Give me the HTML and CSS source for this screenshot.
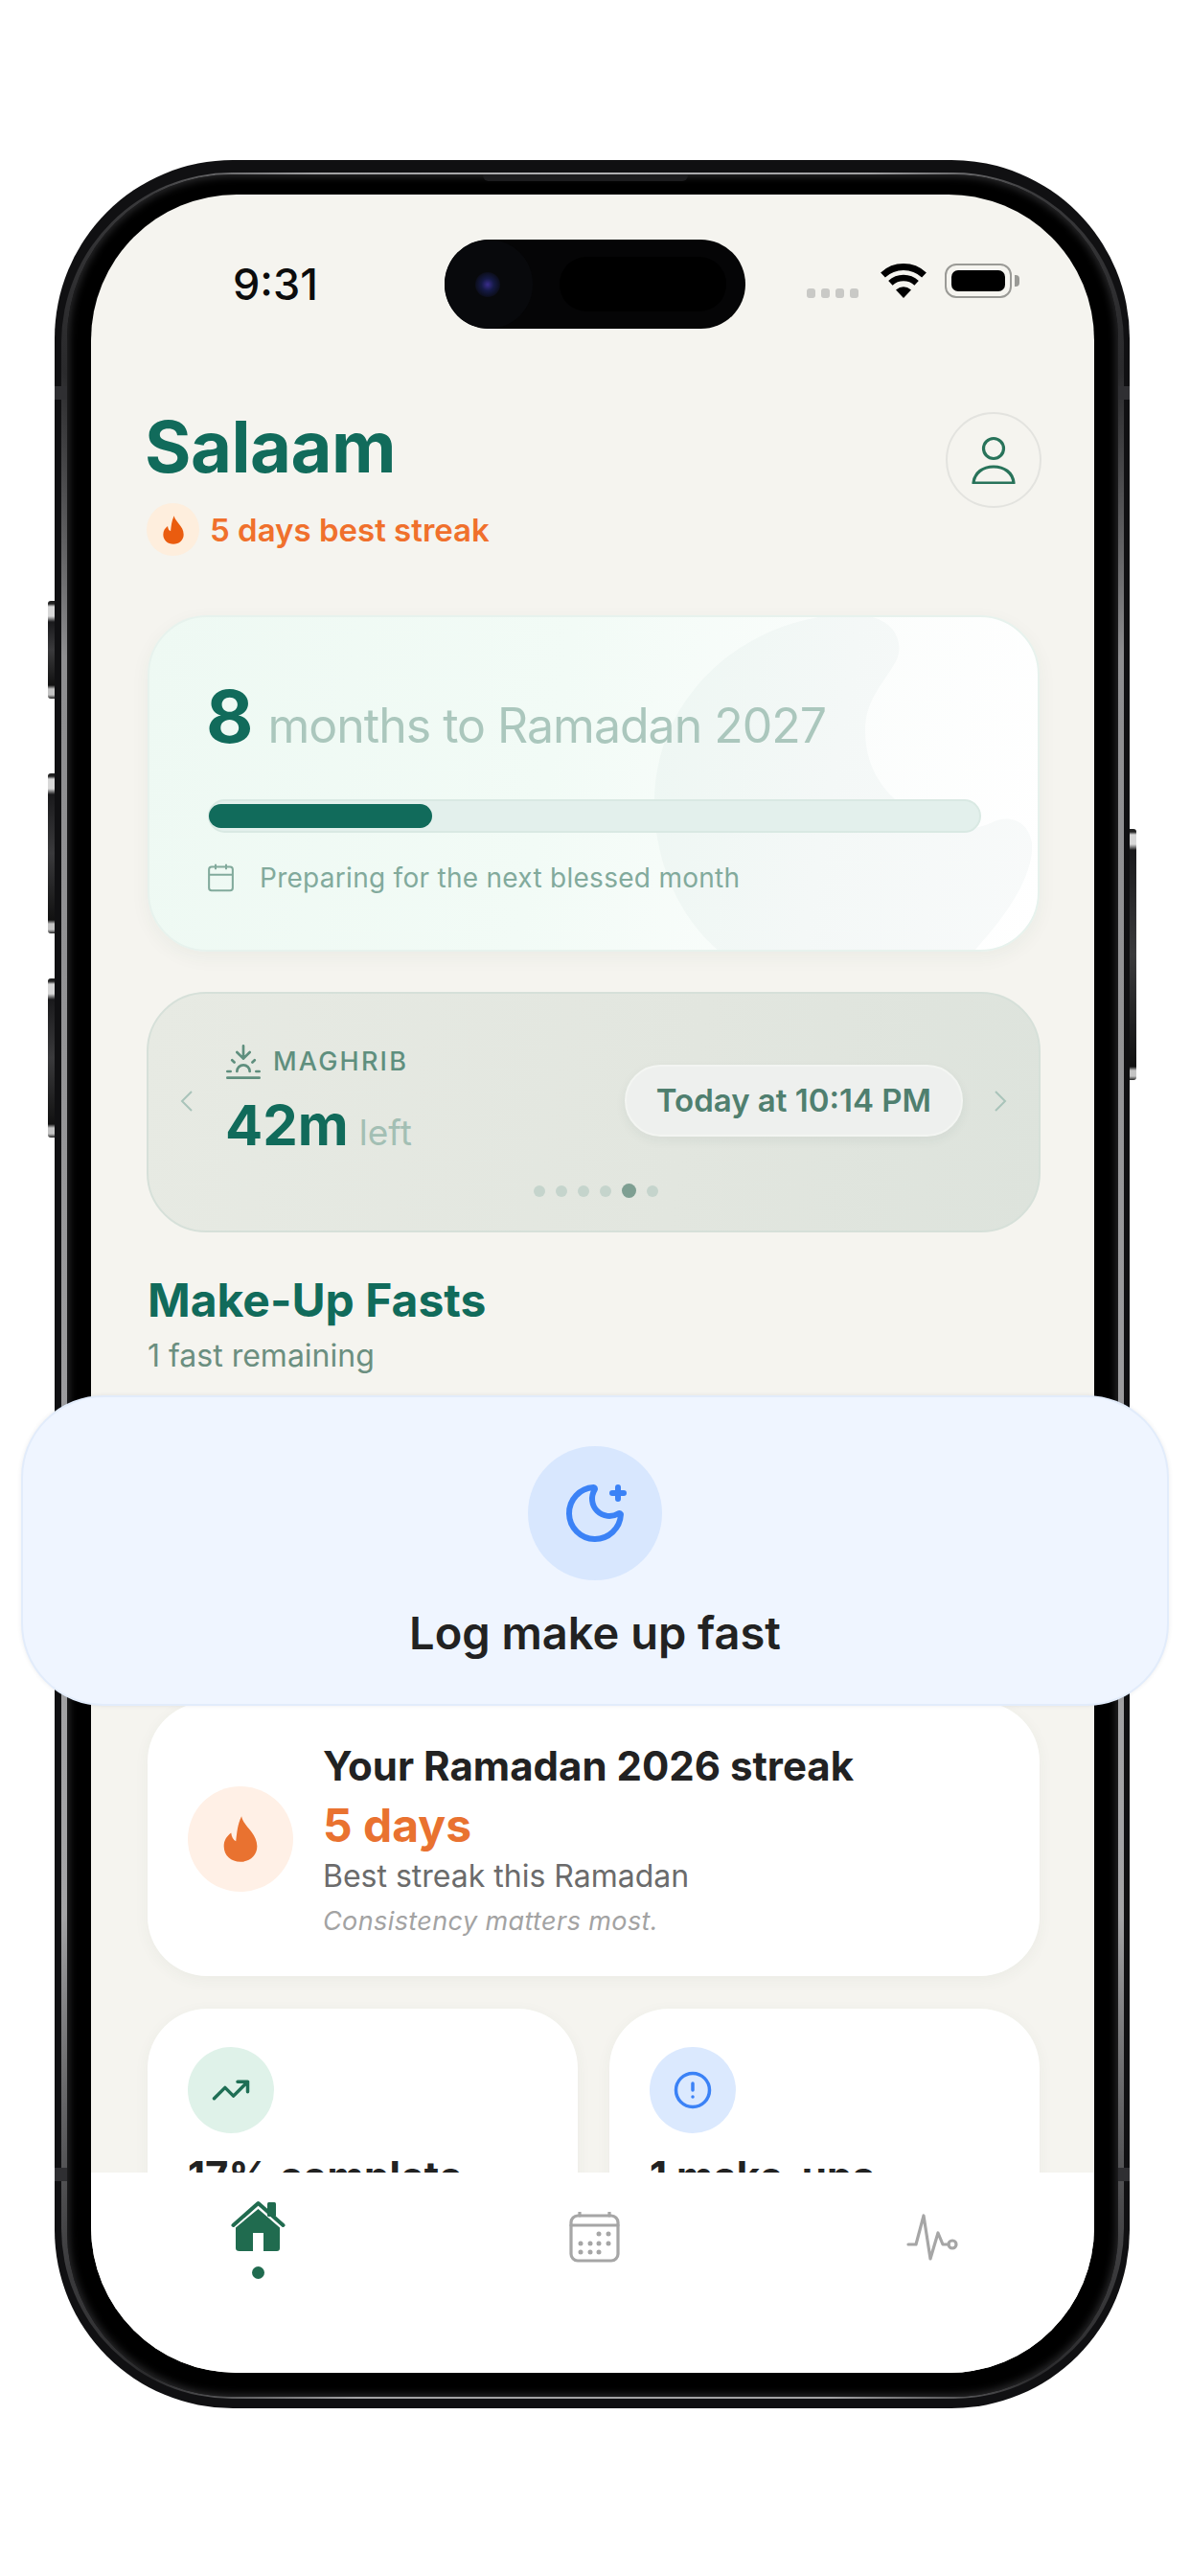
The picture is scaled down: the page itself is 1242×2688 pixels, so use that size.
FILE: index.html
```html
<!DOCTYPE html>
<html lang="en">
<head>
<meta charset="utf-8">
<title>Salaam</title>
<link rel="stylesheet" href="styles.css">
</head>
<body>
<div class="stage">
  <span class="side side-a"></span>
  <span class="side side-b"></span>
  <span class="side side-c"></span>
  <span class="side side-r"></span>
  <div class="phone">
    <span class="band band-tl"></span><span class="band band-tr"></span><span class="band band-bl"></span><span class="band band-br"></span>
    <div class="rim">
      <div class="bezel">
        <span class="speaker"></span>
        <div class="screen">
          <div class="scroll">
            <div class="status">
              <span class="time">9:31</span>
              <div class="island"><span class="lens-well"><span class="lens"></span></span><span class="island-pad"></span></div>
              <div class="status-right">
                <div class="signal"><i></i><i></i><i></i><i></i></div>
                <svg class="wifi" viewBox="0 0 48 36"><path d="M2.5 12A31.5 31.5 0 0 1 45.5 12" fill="none" stroke="#000" stroke-width="7"/><path d="M10.4 20.4A20 20 0 0 1 37.6 20.4" fill="none" stroke="#000" stroke-width="6.5"/><path d="M24 36L16 27.5Q24 21 32 27.5Z" fill="#000"/></svg>
                <div class="battery"><span class="battery-fill"></span></div>
                <span class="battery-nub"></span>
              </div>
            </div>

            <header class="head">
              <div class="head-left">
                <h1 class="hello">Salaam</h1>
                <div class="best">
                  <span class="best-icon"><svg class="flame-s" viewBox="0 0 24 24"><path d="M12.5 1C13.5 6 20 9 20 15.5C20 20 16.5 23 12 23C7.5 23 4 20 4 15.5C4 12.5 5.5 10.5 7.5 9C7.7 11 8.5 12.5 9.8 13C10.3 9 10.5 5 12.5 1Z"/></svg></span>
                  <span class="best-text">5 days best streak</span>
                </div>
              </div>
              <button class="avatar" type="button">
                <svg class="avatar-icon" viewBox="0 0 50 50"><circle cx="25" cy="13" r="10.5"/><path d="M4 49C5 38 14 32 25 32C36 32 45 38 46 49Z"/></svg>
              </button>
            </header>

            <section class="count">
              <svg class="crescent" viewBox="0 0 931 351" preserveAspectRatio="none"><path d="M700 2C600 20 529 100 529 195C529 265 560 320 597 351L862 351C900 310 925 270 923 238C920 215 900 208 884 215C865 224 845 226 827 220C775 200 749 165 749 121C749 90 765 75 780 50C792 30 780 0 740 0Z"/></svg>
              <div class="count-row"><span class="count-num">8</span><span class="count-label">months to Ramadan 2027</span></div>
              <div class="bar"><div class="bar-fill" style="width:29%"></div></div>
              <div class="count-note">
                <svg class="note-icon" viewBox="0 0 24 24"><path d="M8 2v4M16 2v4M3 10h18"/><rect x="3" y="4" width="18" height="18" rx="2"/></svg>
                <span>Preparing for the next blessed month</span>
              </div>
            </section>

            <section class="prayer">
              <div class="prayer-row">
                <svg class="chev" viewBox="0 0 13 22"><path d="M12 1L2 11L12 21"/></svg>
                <div class="prayer-main">
                  <div class="prayer-name">
                    <svg class="sunset" viewBox="0 0 24 24"><path d="M12 10V2M4.93 10.93l1.41 1.41M2 18h2M20 18h2M19.07 10.93l-1.41 1.41M22 22H2M16 6l-4 4-4-4M16 18a4 4 0 0 0-8 0"/></svg>
                    <span>MAGHRIB</span>
                  </div>
                  <div class="prayer-left"><b>42m</b><span>left</span></div>
                </div>
                <div class="pill">Today at 10:14 PM</div>
                <svg class="chev chev-r" viewBox="0 0 13 22"><path d="M1 1L11 11L1 21"/></svg>
              </div>
              <div class="dots"><i></i><i></i><i></i><i></i><i class="on"></i><i></i></div>
            </section>

            <h2 class="section-title">Make-Up Fasts</h2>
            <p class="section-sub">1 fast remaining</p>
            <div class="slot"></div>

            <section class="card streak">
              <span class="streak-icon"><svg class="flame-l" viewBox="0 0 24 24"><path d="M12.5 1C13.5 6 20 9 20 15.5C20 20 16.5 23 12 23C7.5 23 4 20 4 15.5C4 12.5 5.5 10.5 7.5 9C7.7 11 8.5 12.5 9.8 13C10.3 9 10.5 5 12.5 1Z"/></svg></span>
              <div>
                <div class="streak-title">Your Ramadan 2026 streak</div>
                <div class="streak-val">5 days</div>
                <div class="streak-desc">Best streak this Ramadan</div>
                <div class="streak-note">Consistency matters most.</div>
              </div>
            </section>

            <div class="stats">
              <section class="card stat">
                <span class="stat-icon stat-green"><svg class="lucide" viewBox="0 0 24 24"><path d="M16 7h6v6M22 7l-8.5 8.5-5-5L2 17"/></svg></span>
                <div class="stat-title">17% complete</div>
              </section>
              <section class="card stat">
                <span class="stat-icon stat-blue"><svg class="lucide" viewBox="0 0 24 24"><circle cx="12" cy="12" r="10"/><path d="M12 8v4M12 16h.01"/></svg></span>
                <div class="stat-title">1 make-ups</div>
              </section>
            </div>
          </div>

          <nav class="tabs">
            <div class="tab">
              <svg class="tab-home" viewBox="0 0 57 53"><rect class="home-fill" x="38" y="2" width="9" height="15" rx="1.5"/><path class="home-roof" d="M2.5 26L28.5 3L54.5 26"/><path class="home-fill" fill-rule="evenodd" d="M28.5 9L51 28.5V50Q51 53 48 53H34V34H23V53H9Q5 53 5 50V28.5Z"/></svg>
              <span class="tab-dot"></span>
            </div>
            <svg class="tab-cal" viewBox="0 0 53 53"><rect class="tab-line" x="2" y="4" width="49" height="47" rx="7"/><path class="tab-line" d="M11 0v4M42 0v4M2 14h49"/><g class="tab-dots"><circle cx="31" cy="23" r="2.5"/><circle cx="41" cy="23" r="2.5"/><circle cx="12" cy="33" r="2.5"/><circle cx="22" cy="33" r="2.5"/><circle cx="31" cy="33" r="2.5"/><circle cx="41" cy="33" r="2.5"/><circle cx="12" cy="42" r="2.5"/><circle cx="22" cy="42" r="2.5"/><circle cx="31" cy="42" r="2.5"/></g></svg>
            <svg class="tab-pulse" viewBox="-1 -1 54 49"><path class="tab-line" d="M1 31H9L17 1L24 46L32 19L37 31H43"/><circle class="tab-line" cx="47" cy="31" r="4"/></svg>
          </nav>
        </div>
      </div>
    </div>
  </div>

  <div class="log-card">
    <span class="log-icon"><svg class="moon" viewBox="0 0 24 24"><path d="M18 5h4M20 3v4M20.985 12.486a9 9 0 1 1-9.473-9.472c.405-.022.617.46.402.803a6 6 0 0 0 8.268 8.268c.344-.215.825-.004.803.401"/></svg></span>
    <div class="log-text">Log make up fast</div>
  </div>
</div>
</body>
</html>
```
FILE: styles.css
```css
* { box-sizing: border-box; }
html, body { margin: 0; padding: 0; background: #fff; }
body { font-family: Inter, "Liberation Sans", sans-serif; color: #222; }
h1, h2, p { margin: 0; }

.stage {
  position: relative;
  width: 1242px;
  height: 2688px;
  padding: 167px 63px 0 57px;
  overflow: hidden;
}

/* device frame */
.phone {
  position: relative;
  width: 1122px;
  height: 2346px;
  padding: 13px 6px 10px 7px;
  border-radius: 186px;
  background: #101012;
}
.rim {
  height: 100%;
  padding: 2px 6px 2px 6px;
  border-radius: 178px;
  background: conic-gradient(#b0b0b2 0deg, #a0a0a2 14deg, #3a3a3c 22deg, #2a2a2c 30deg, #8e8e90 40deg, #a4a4a6 140deg, #3a3a3c 152deg, #2a2a2c 158deg, #a4a4a6 168deg, #a4a4a6 192deg, #2a2a2c 202deg, #3a3a3c 208deg, #a4a4a6 220deg, #8e8e90 320deg, #2a2a2c 330deg, #3a3a3c 338deg, #a0a0a2 346deg, #b0b0b2 360deg);
}
.bezel {
  position: relative;
  height: 100%;
  padding: 21px 25px 25px 25px;
  border-radius: 172px;
  background: #000;
  box-shadow: inset 0 0 8px 2px #2c2c2e;
}
.speaker {
  position: absolute;
  top: 0;
  left: 434px;
  width: 214px;
  height: 7px;
  border-radius: 0 0 6px 6px;
  background: #1c1c1e;
}
.screen {
  display: flex;
  flex-direction: column;
  width: 100%;
  height: 100%;
  border-radius: 152px;
  overflow: hidden;
  background: #f5f4ef;
}
.side {
  position: absolute;
  left: 50px;
  width: 8px;
  border-radius: 3px 0 0 3px;
  background: linear-gradient(180deg, #222 0 3px, #d8d8d8 6px 16px, #1a1a1c 22px, #3a3a3c 50%, #111 calc(100% - 14px), #c4c4c4 calc(100% - 10px) calc(100% - 4px), #222 100%);
}
.side-a { top: 627px; height: 102px; }
.side-b { top: 807px; height: 167px; }
.side-c { top: 1021px; height: 166px; }
.side-r { left: 1178px; top: 865px; height: 262px; border-radius: 0 3px 3px 0; }
.band { position: absolute; width: 13px; height: 14px; background: #2f2f32; }
.band-tl { left: 0; top: 236px; }
.band-tr { right: 0; top: 236px; }
.band-bl { left: 0; top: 2095px; }
.band-br { right: 0; top: 2095px; }

/* scrolling content */
.scroll {
  flex: 1;
  min-height: 0;
  overflow: hidden;
  padding: 0 57px 0 59px;
}

/* status bar */
.status {
  position: relative;
  display: flex;
  align-items: center;
  height: 227px;
  padding: 47px 0 87px 148px;
  margin: 0 -57px 0 -59px;
}
.time {
  width: 221px;
  font-size: 45px;
  font-weight: 500;
  line-height: 93px;
  color: #0c0c0c;
  margin-top: -1px;
}
.island {
  display: flex;
  align-items: center;
  width: 314px;
  height: 93px;
  border-radius: 47px;
  background: #050506;
}
.lens-well {
  display: flex;
  align-items: center;
  justify-content: center;
  width: 92px;
  height: 93px;
  padding-right: 2px;
  border-radius: 47px;
  background: #08090c;
}
.lens {
  width: 26px;
  height: 26px;
  border-radius: 50%;
  background: radial-gradient(circle at 50% 50%, #3a2d8c 0, #151a46 35%, #0c0e1c 70%, #08090c 100%);
}
.island-pad {
  width: 174px;
  height: 57px;
  margin-left: 28px;
  border-radius: 28px;
  background: #000;
}
.status-right {
  display: flex;
  align-items: flex-start;
  margin-left: 64px;
  margin-top: -7px;
}
.signal {
  display: flex;
  gap: 6px;
  margin-top: 26px;
}
.signal i {
  width: 9px;
  height: 10px;
  border-radius: 3px;
  background: #c9c9c6;
}
.wifi { width: 48px; height: 36px; margin-left: 23px; }
.battery {
  width: 70px;
  height: 36px;
  margin-left: 19px;
  padding: 5px;
  border: 2px solid #9a9a96;
  border-radius: 12px;
}
.battery-fill {
  display: block;
  height: 100%;
  border-radius: 7px;
  background: #000;
}
.battery-nub {
  width: 5px;
  height: 12px;
  margin: 12px 0 0 3px;
  border-radius: 0 4px 4px 0;
  background: #9a9a96;
}

/* header */
.head {
  display: flex;
  justify-content: space-between;
  align-items: flex-start;
  margin-right: -2px;
}
.hello {
  margin-left: -3px;
  font-size: 74px;
  line-height: 72px;
  font-weight: 700;
  letter-spacing: -0.5px;
  color: #116b5b;
}
.best {
  display: flex;
  align-items: center;
  gap: 11px;
  margin: 23px 0 0 -1px;
}
.best-icon {
  display: flex;
  align-items: center;
  justify-content: center;
  width: 55px;
  height: 55px;
  border-radius: 50%;
  background: #feeedd;
}
.flame-s { width: 32px; height: 32px; fill: #ea5c0f; }
.best-text {
  font-size: 33px;
  font-weight: 600;
  color: #f0702c;
}
.avatar {
  display: flex;
  align-items: center;
  justify-content: center;
  width: 100px;
  height: 100px;
  padding: 0;
  border: 2px solid #e3e3df;
  border-radius: 50%;
  background: transparent;
}
.avatar-icon {
  width: 50px;
  height: 50px;
  fill: none;
  stroke: #28735a;
  stroke-width: 3.2;
  stroke-linejoin: round;
}

/* countdown card */
.count {
  position: relative;
  margin-top: 62px;
  height: 351px;
  padding: 65px 59px 0 61px;
  border: 2px solid #e7f2ed;
  border-radius: 62px;
  overflow: hidden;
  background: linear-gradient(100deg, #eef9f3 0, #f2fbf6 45%, #fbfdfc 75%, #fff 100%);
  box-shadow: 0 6px 20px rgba(40, 70, 60, 0.05);
}
.crescent {
  position: absolute;
  left: -2px;
  top: -2px;
  width: 931px;
  height: 351px;
  fill: rgba(40, 90, 90, 0.032);
}
.count-row {
  position: relative;
  display: flex;
  align-items: baseline;
  gap: 15px;
}
.count-num {
  margin-left: -2px;
  font-size: 76px;
  line-height: 76px;
  font-weight: 700;
  color: #116b5b;
}
.count-label {
  font-size: 50px;
  font-weight: 400;
  letter-spacing: -1px;
  color: #abc7bd;
}
.bar {
  position: relative;
  height: 35px;
  margin-top: 47px;
  padding: 3px 0;
  border: 2px solid #d9e9e3;
  border-radius: 18px;
  background: #e3f0ec;
}
.bar-fill {
  height: 100%;
  margin: 0 0 0 -1px;
  border-radius: 15px;
  background: #116b5b;
}
.count-note {
  position: relative;
  display: flex;
  align-items: center;
  gap: 24px;
  margin-top: 30px;
  font-size: 28px;
  line-height: 32px;
  letter-spacing: 0.28px;
  color: #82aa9c;
}
.note-icon {
  width: 33px;
  height: 33px;
  margin-left: -3px;
  fill: none;
  stroke: #82aa9c;
  stroke-width: 1.5;
}

/* prayer card */
.prayer {
  margin: 42px -1px 0;
  height: 251px;
  padding-top: 52px;
  border: 2px solid #d6e0d9;
  border-radius: 62px;
  background: linear-gradient(100deg, #e7eae3 0, #e2e6df 60%, #dde3dc 100%);
}
.prayer-row {
  display: flex;
  align-items: center;
  padding: 0 33px;
}
.chev {
  flex: none;
  width: 13px;
  height: 22px;
  fill: none;
  stroke: #a9c4ba;
  stroke-width: 2;
}
.chev-r { margin-left: 33px; }
.prayer-main {
  flex: 1;
  margin-left: 35px;
  padding-bottom: 4px;
}
.prayer-name {
  display: flex;
  align-items: center;
  gap: 11px;
  height: 37px;
  font-size: 27px;
  font-weight: 500;
  letter-spacing: 2.2px;
  color: #5f8f7e;
}
.sunset {
  width: 40px;
  height: 40px;
  margin-left: -2px;
  fill: none;
  stroke: #5f8f7e;
  stroke-width: 1.6;
  stroke-linecap: round;
  stroke-linejoin: round;
}
.prayer-left {
  display: flex;
  align-items: baseline;
  gap: 11px;
  margin: 19px 0 0 -1px;
}
.prayer-left b {
  font-size: 58px;
  line-height: 58px;
  font-weight: 700;
  color: #116b5b;
}
.prayer-left span {
  font-size: 37px;
  color: #a3bfb4;
}
.pill {
  height: 75px;
  padding: 0 31px;
  border: 2px solid #f3f5f2;
  border-radius: 38px;
  font-size: 33px;
  line-height: 71px;
  font-weight: 600;
  color: #4f7f6f;
  background: #eef0ee;
  box-shadow: 0 4px 12px rgba(40, 70, 60, 0.06);
}
.dots {
  display: flex;
  align-items: center;
  justify-content: center;
  gap: 11px;
  height: 15px;
  margin-top: 27px;
  padding-left: 4px;
}
.dots i {
  width: 12px;
  height: 12px;
  border-radius: 50%;
  background: #c5d4cc;
}
.dots .on {
  width: 15px;
  height: 15px;
  background: #7e9f92;
}

/* section heading */
.section-title {
  margin-top: 42px;
  font-size: 48px;
  line-height: 58px;
  font-weight: 700;
  color: #116b5b;
}
.section-sub {
  margin-top: 10px;
  font-size: 32px;
  line-height: 38px;
  color: #6b8f80;
}
.slot { height: 342px; }

/* white cards */
.card {
  border-radius: 62px;
  background: #fff;
  box-shadow: 0 4px 16px rgba(60, 70, 60, 0.05);
}
.streak {
  display: flex;
  align-items: center;
  gap: 31px;
  height: 286px;
  padding: 2px 42px 0;
}
.streak-icon {
  flex: none;
  display: flex;
  align-items: center;
  justify-content: center;
  width: 110px;
  height: 110px;
  margin-top: -2px;
  border-radius: 50%;
  background: #fff0e6;
}
.flame-l { width: 52px; height: 52px; fill: #e97230; }
.streak-title {
  font-size: 42px;
  line-height: 50px;
  font-weight: 700;
  color: #222;
}
.streak-val {
  margin-top: 7px;
  font-size: 48px;
  line-height: 60px;
  font-weight: 700;
  color: #e97230;
}
.streak-desc {
  margin-top: 3px;
  font-size: 32px;
  line-height: 40px;
  color: #6b6b6b;
}
.streak-note {
  margin-top: 9px;
  font-size: 27px;
  line-height: 36px;
  font-style: italic;
  letter-spacing: 0.4px;
  color: #a3a3a3;
}
.stats {
  display: grid;
  grid-template-columns: 449px 449px;
  gap: 33px;
  margin-top: 34px;
}
.stat {
  height: 340px;
  padding: 40px 42px;
}
.stat-icon {
  display: flex;
  align-items: center;
  justify-content: center;
  width: 90px;
  height: 90px;
  border-radius: 50%;
}
.stat-green { background: #dff2e9; color: #1f6f55; }
.stat-blue { background: #dbe9fe; color: #3b82f6; }
.lucide {
  width: 42px;
  height: 42px;
  fill: none;
  stroke: currentColor;
  stroke-width: 2;
  stroke-linecap: round;
  stroke-linejoin: round;
}
.stat-title {
  margin-top: 20px;
  font-size: 42px;
  line-height: 50px;
  font-weight: 700;
  color: #222;
}

/* tab bar */
.tabs {
  flex: none;
  display: flex;
  align-items: flex-start;
  gap: 296px;
  height: 209px;
  padding: 29px 0 0 146px;
  background: #fff;
}
.tab {
  display: flex;
  flex-direction: column;
  align-items: center;
  gap: 16px;
  width: 57px;
}
.tab-home { width: 57px; height: 53px; }
.home-fill { fill: #206b4f; }
.home-roof {
  fill: none;
  stroke: #206b4f;
  stroke-width: 4;
  stroke-linecap: round;
  stroke-linejoin: round;
}
.tab-dot {
  width: 13px;
  height: 13px;
  border-radius: 50%;
  background: #206b4f;
}
.tab-cal { width: 53px; height: 53px; margin: 12px 0 0 0; }
.tab-pulse { width: 54px; height: 49px; margin: 14px 0 0 3px; }
.tab-line {
  fill: none;
  stroke: #a6a6a6;
  stroke-width: 3.2;
  stroke-linecap: round;
  stroke-linejoin: round;
}
.tab-dots { fill: #a6a6a6; }

/* floating highlighted tile */
.log-card {
  position: absolute;
  left: 22px;
  top: 1456px;
  display: flex;
  flex-direction: column;
  align-items: center;
  width: 1198px;
  height: 324px;
  padding-top: 51px;
  border: 2px solid #e2ecfb;
  border-radius: 86px;
  background: #eff5ff;
  box-shadow: 0 0 4px rgba(60, 70, 90, 0.1);
}
.log-icon {
  display: flex;
  align-items: center;
  justify-content: center;
  width: 140px;
  height: 140px;
  border-radius: 50%;
  background: #d8e7fe;
}
.moon {
  width: 72px;
  height: 72px;
  fill: none;
  stroke: #3b82f6;
  stroke-width: 2;
  stroke-linecap: round;
  stroke-linejoin: round;
}
.log-text {
  margin-top: 28px;
  font-size: 47px;
  line-height: 54px;
  font-weight: 600;
  color: #222;
}
```
